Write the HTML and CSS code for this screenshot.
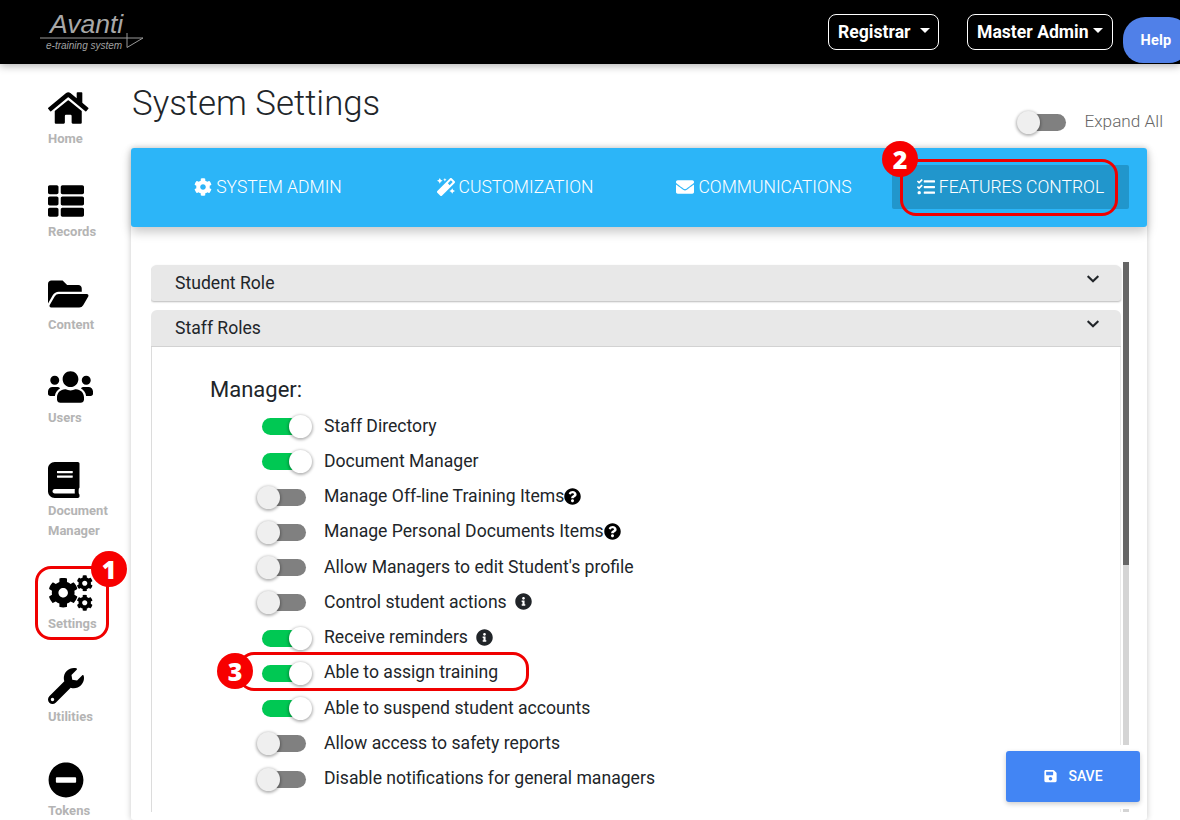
FILE: index.html
```html
<!DOCTYPE html>
<html lang="en">
<head>
<meta charset="utf-8">
<title>System Settings</title>
<link rel="stylesheet" href="styles.css">
</head>
<body>
<svg class="defs" aria-hidden="true">
  <symbol id="i-cog" viewBox="0 0 512 512"><path d="M487.4 315.7l-42.6-24.6c4.3-23.2 4.3-47 0-70.2l42.6-24.6c4.9-2.8 7.1-8.6 5.5-14-11.1-35.6-30-67.8-54.7-94.6-3.8-4.1-10-5.1-14.8-2.3L380.8 110c-17.9-15.4-38.5-27.3-60.8-35.1V25.8c0-5.6-3.9-10.5-9.4-11.7-36.7-8.2-74.3-7.8-109.2 0-5.5 1.2-9.4 6.1-9.4 11.7V75c-22.2 7.9-42.8 19.8-60.8 35.1L88.7 85.5c-4.9-2.8-11-1.9-14.8 2.3-24.7 26.7-43.6 58.9-54.7 94.6-1.7 5.4.6 11.2 5.5 14L67.3 221c-4.3 23.2-4.3 47 0 70.2l-42.6 24.6c-4.9 2.8-7.1 8.6-5.5 14 11.1 35.6 30 67.8 54.7 94.6 3.8 4.1 10 5.1 14.8 2.3l42.6-24.6c17.9 15.4 38.5 27.3 60.8 35.1v49.2c0 5.6 3.9 10.5 9.4 11.7 36.7 8.2 74.3 7.8 109.2 0 5.5-1.2 9.4-6.1 9.4-11.7v-49.2c22.2-7.9 42.8-19.8 60.8-35.1l42.6 24.6c4.9 2.8 11 1.9 14.8-2.3 24.7-26.7 43.6-58.9 54.7-94.6 1.5-5.5-.7-11.3-5.6-14.1zM256 336c-44.1 0-80-35.9-80-80s35.9-80 80-80 80 35.9 80 80-35.9 80-80 80z"/></symbol>
  <symbol id="i-question" viewBox="0 0 512 512"><path d="M504 256c0 136.997-111.043 248-248 248S8 392.997 8 256C8 119.083 119.043 8 256 8s248 111.083 248 248zM262.655 90c-54.497 0-89.255 22.957-116.549 63.758-3.536 5.286-2.353 12.415 2.715 16.258l34.699 26.31c5.205 3.947 12.621 3.008 16.665-2.122 17.864-22.658 30.113-35.797 57.303-35.797 20.429 0 45.698 13.148 45.698 32.958 0 14.976-12.363 22.667-32.534 33.976C247.128 238.528 216 254.941 216 296v4c0 6.627 5.373 12 12 12h56c6.627 0 12-5.373 12-12v-1.333c0-28.462 83.186-29.647 83.186-106.667 0-58.002-60.165-102-116.531-102zM256 338c-25.365 0-46 20.635-46 46 0 25.364 20.635 46 46 46s46-20.636 46-46c0-25.365-20.635-46-46-46z"/></symbol>
  <symbol id="i-info" viewBox="0 0 512 512"><path d="M256 8C119.043 8 8 119.083 8 256c0 136.997 111.043 248 248 248s248-111.003 248-248C504 119.083 392.957 8 256 8zm0 110c23.196 0 42 18.804 42 42s-18.804 42-42 42-42-18.804-42-42 18.804-42 42-42zm56 254c0 6.627-5.373 12-12 12h-88c-6.627 0-12-5.373-12-12v-24c0-6.627 5.373-12 12-12h12v-64h-12c-6.627 0-12-5.373-12-12v-24c0-6.627 5.373-12 12-12h64c6.627 0 12 5.373 12 12v100h12c6.627 0 12 5.373 12 12v24z"/></symbol>
  <symbol id="i-chevron" viewBox="0 0 448 512"><path d="M207.029 381.476L12.686 187.132c-9.373-9.373-9.373-24.569 0-33.941l22.667-22.667c9.357-9.357 24.522-9.375 33.901-.04L224 284.505l154.745-154.021c9.379-9.335 24.544-9.317 33.901.04l22.667 22.667c9.373 9.373 9.373 24.569 0 33.941L240.971 381.476c-9.373 9.372-24.569 9.372-33.942 0z"/></symbol>
</svg>

<header class="topbar">
  <svg class="logo" viewBox="0 0 104 42" role="img" aria-label="Avanti e-training system">
    <text class="logo-name" x="10" y="22.5">Avanti</text>
    <path class="logo-line" d="M0 28H103L87 37.5V23"/>
    <text class="logo-sub" x="6" y="38.5">e-training system</text>
  </svg>
  <div class="topbar-actions">
    <button class="role-btn role-reg">Registrar<span class="caret"></span></button>
    <button class="role-btn role-admin">Master Admin<span class="caret"></span></button>
    <button class="help-btn">Help</button>
  </div>
</header>

<div class="layout">
  <nav class="sidebar">
    <a class="nav-item">
      <svg class="nav-icon" viewBox="0 0 576 512"><path d="M280.37 148.26L96 300.11V464a16 16 0 0 0 16 16l112.06-.29a16 16 0 0 0 15.92-16V368a16 16 0 0 1 16-16h64a16 16 0 0 1 16 16v95.64a16 16 0 0 0 16 16.05L464 480a16 16 0 0 0 16-16V300L295.67 148.26a12.19 12.19 0 0 0-15.3 0zM571.6 251.47L488 182.56V44.05a12 12 0 0 0-12-12h-56a12 12 0 0 0-12 12v72.61L318.47 43a48 48 0 0 0-61 0L4.34 251.47a12 12 0 0 0-1.6 16.9l25.5 31A12 12 0 0 0 45.15 301l235.22-193.74a12.19 12.19 0 0 1 15.3 0L530.9 301a12 12 0 0 0 16.9-1.6l25.5-31a12 12 0 0 0-1.7-16.93z"/></svg>
      <span>Home</span>
    </a>
    <a class="nav-item">
      <svg class="nav-icon" viewBox="0 0 512 512"><path d="M149.333 216v80c0 13.255-10.745 24-24 24H24c-13.255 0-24-10.745-24-24v-80c0-13.255 10.745-24 24-24h101.333c13.255 0 24 10.745 24 24zM0 376v80c0 13.255 10.745 24 24 24h101.333c13.255 0 24-10.745 24-24v-80c0-13.255-10.745-24-24-24H24c-13.255 0-24 10.745-24 24zM125.333 32H24C10.745 32 0 42.745 0 56v80c0 13.255 10.745 24 24 24h101.333c13.255 0 24-10.745 24-24V56c0-13.255-10.745-24-24-24zm80 448H488c13.255 0 24-10.745 24-24v-80c0-13.255-10.745-24-24-24H205.333c-13.255 0-24 10.745-24 24v80c0 13.255 10.745 24 24 24zm-24-424v80c0 13.255 10.745 24 24 24H488c13.255 0 24-10.745 24-24V56c0-13.255-10.745-24-24-24H205.333c-13.255 0-24 10.745-24 24zm24 264H488c13.255 0 24-10.745 24-24v-80c0-13.255-10.745-24-24-24H205.333c-13.255 0-24 10.745-24 24v80c0 13.255 10.745 24 24 24z"/></svg>
      <span>Records</span>
    </a>
    <a class="nav-item">
      <svg class="nav-icon" viewBox="0 0 576 512"><path d="M572.694 292.093L500.27 416.248A63.997 63.997 0 0 1 444.989 448H45.025c-18.523 0-30.064-20.093-20.731-36.093l72.424-124.155A64 64 0 0 1 152 256h399.964c18.523 0 30.064 20.093 20.73 36.093zM152 224h328v-48c0-26.51-21.49-48-48-48H272l-64-64H48C21.49 64 0 85.49 0 112v278.046l69.077-118.418C86.214 242.25 117.989 224 152 224z"/></svg>
      <span>Content</span>
    </a>
    <a class="nav-item">
      <svg class="nav-icon" viewBox="0 0 640 512"><path d="M96 224c35.3 0 64-28.7 64-64s-28.7-64-64-64-64 28.7-64 64 28.7 64 64 64zm448 0c35.3 0 64-28.7 64-64s-28.7-64-64-64-64 28.7-64 64 28.7 64 64 64zm32 32h-64c-17.6 0-33.5 7.1-45.1 18.6 40.3 22.1 68.9 62 75.1 109.4h66c17.7 0 32-14.3 32-32v-32c0-35.3-28.7-64-64-64zm-256 0c61.9 0 112-50.1 112-112S381.9 32 320 32 208 82.1 208 144s50.1 112 112 112zm76.8 32h-8.3c-20.8 10-43.9 16-68.5 16s-47.6-6-68.5-16h-8.3C179.6 288 128 339.6 128 403.2V432c0 26.5 21.5 48 48 48h288c26.5 0 48-21.5 48-48v-28.8c0-63.6-51.6-115.2-115.2-115.2zm-223.7-13.4C161.5 263.1 145.6 256 128 256H64c-35.3 0-64 28.7-64 64v32c0 17.7 14.3 32 32 32h65.9c6.3-47.4 34.9-87.3 75.2-109.4z"/></svg>
      <span>Users</span>
    </a>
    <a class="nav-item">
      <svg class="nav-icon" viewBox="0 0 448 512"><path d="M448 360V24c0-13.3-10.7-24-24-24H96C43 0 0 43 0 96v320c0 53 43 96 96 96h328c13.3 0 24-10.7 24-24v-16c0-7.5-3.5-14.3-8.9-18.7-4.2-15.4-4.2-59.3 0-74.7 5.4-4.3 8.9-11.1 8.9-18.6zM128 134c0-3.3 2.7-6 6-6h212c3.3 0 6 2.7 6 6v20c0 3.3-2.7 6-6 6H134c-3.3 0-6-2.7-6-6v-20zm0 64c0-3.3 2.7-6 6-6h212c3.3 0 6 2.7 6 6v20c0 3.3-2.7 6-6 6H134c-3.3 0-6-2.7-6-6v-20zm253.4 250H96c-17.7 0-32-14.3-32-32 0-17.6 14.4-32 32-32h285.4c-1.9 17.1-1.9 46.9 0 64z"/></svg>
      <span>Document<br>Manager</span>
    </a>
    <a class="nav-item">
      <svg class="nav-icon" viewBox="0 0 640 512">
        <use href="#i-cog" x="0" y="36" width="432" height="432"/>
        <use href="#i-cog" x="405" y="0" width="235" height="235"/>
        <use href="#i-cog" x="405" y="277" width="235" height="235"/>
      </svg>
      <span>Settings</span>
    </a>
    <a class="nav-item nav-item-gap">
      <svg class="nav-icon" viewBox="0 0 512 512"><path d="M507.73 109.1c-2.24-9.03-13.54-12.09-20.12-5.51l-74.36 74.36-67.88-11.31-11.31-67.88 74.36-74.36c6.62-6.62 3.43-17.9-5.66-20.16-47.38-11.74-99.55.91-136.58 37.93-39.64 39.64-50.55 97.1-34.05 147.2L18.74 402.76c-24.99 24.99-24.99 65.51 0 90.5 24.99 24.99 65.51 24.99 90.5 0l213.21-213.21c50.12 16.71 107.47 5.68 147.37-34.22 37.07-37.07 49.7-89.32 37.91-136.73zM64 472c-13.25 0-24-10.75-24-24 0-13.26 10.75-24 24-24s24 10.74 24 24c0 13.25-10.75 24-24 24z"/></svg>
      <span>Utilities</span>
    </a>
    <a class="nav-item">
      <svg class="nav-icon" viewBox="0 0 512 512"><path d="M256 8C119 8 8 119 8 256s111 248 248 248 248-111 248-248S393 8 256 8zM124 296c-6.6 0-12-5.4-12-12v-56c0-6.6 5.4-12 12-12h264c6.6 0 12 5.4 12 12v56c0 6.6-5.4 12-12 12H124z"/></svg>
      <span>Tokens</span>
    </a>
  </nav>

  <main class="main">
    <div class="title-row">
      <h1 class="page-title">System Settings</h1>
      <div class="expand">
        <span class="switch switch-off"></span>
        <span class="expand-label">Expand All</span>
      </div>
    </div>

    <section class="card">
      <div class="tabs">
        <a class="tab">
          <svg class="tab-icon" viewBox="0 0 512 512"><use href="#i-cog"/></svg>SYSTEM ADMIN
        </a>
        <a class="tab">
          <svg class="tab-icon" viewBox="0 0 512 512"><path d="M224 96l16-32 32-16-32-16-16-32-16 32-32 16 32 16 16 32zM80 160l26.66-53.33L160 80l-53.34-26.67L80 0 53.34 53.33 0 80l53.34 26.67L80 160zm352 128l-26.66 53.33L352 368l53.34 26.67L432 448l26.66-53.33L512 368l-53.34-26.67L432 288zm70.62-193.77L417.77 9.38C411.53 3.12 403.34 0 395.15 0c-8.19 0-16.38 3.12-22.63 9.38L9.38 372.52c-12.5 12.5-12.5 32.76 0 45.25l84.85 84.85c6.25 6.25 14.44 9.37 22.62 9.37 8.19 0 16.38-3.12 22.63-9.37l363.14-363.15c12.5-12.48 12.5-32.75 0-45.24zM359.45 203.46l-50.91-50.91 86.6-86.6 50.91 50.91-86.6 86.6z"/></svg>CUSTOMIZATION
        </a>
        <a class="tab">
          <svg class="tab-icon" viewBox="0 0 512 512"><path d="M502.3 190.8c3.9-3.1 9.7-.2 9.7 4.7V400c0 26.5-21.5 48-48 48H48c-26.5 0-48-21.5-48-48V195.6c0-5 5.7-7.8 9.7-4.7 22.4 17.4 52.1 39.5 154.1 113.6 21.1 15.4 56.7 47.8 92.2 47.6 35.7.3 72-32.8 92.3-47.6 102-74.1 131.6-96.3 154-113.7zM256 320c23.2.4 56.6-29.2 73.4-41.4 132.7-96.3 142.8-104.7 173.4-128.7 5.8-4.5 9.2-11.5 9.2-18.9v-19c0-26.5-21.5-48-48-48H48C21.5 64 0 85.5 0 112v19c0 7.4 3.4 14.3 9.2 18.9 30.6 23.9 40.7 32.4 173.4 128.7 16.8 12.2 50.2 41.8 73.4 41.4z"/></svg>COMMUNICATIONS
        </a>
        <a class="tab tab-active">
          <svg class="tab-icon" viewBox="0 0 512 512"><path d="M139.61 35.5a12 12 0 0 0-17 0L58.93 98.81l-22.7-22.12a12 12 0 0 0-17 0L3.53 92.41a12 12 0 0 0 0 17l47.59 47.4a12.78 12.78 0 0 0 17.61 0l15.59-15.62L156.52 69a12.09 12.09 0 0 0 .09-17zm0 159.19a12 12 0 0 0-17 0l-63.68 63.72-22.7-22.1a12 12 0 0 0-17 0L3.53 252a12 12 0 0 0 0 17L51 316.5a12.77 12.77 0 0 0 17.6 0l15.7-15.69 72.2-72.22a12 12 0 0 0 .09-16.9zM64 368c-26.49 0-48.59 21.5-48.59 48S37.53 464 64 464a48 48 0 0 0 0-96zm432 16H208a16 16 0 0 0-16 16v32a16 16 0 0 0 16 16h288a16 16 0 0 0 16-16v-32a16 16 0 0 0-16-16zm0-320H208a16 16 0 0 0-16 16v32a16 16 0 0 0 16 16h288a16 16 0 0 0 16-16V80a16 16 0 0 0-16-16zm0 160H208a16 16 0 0 0-16 16v32a16 16 0 0 0 16 16h288a16 16 0 0 0 16-16v-32a16 16 0 0 0-16-16z"/></svg>FEATURES CONTROL
        </a>
      </div>

      <div class="scroller">
        <div class="accordion">
          <div class="acc-head acc-closed">
            <span>Student Role</span>
            <svg class="chevron"><use href="#i-chevron"/></svg>
          </div>
          <div class="acc-head acc-open">
            <span>Staff Roles</span>
            <svg class="chevron"><use href="#i-chevron"/></svg>
          </div>
          <div class="acc-body">
            <h2 class="role-title">Manager:</h2>
            <ul class="perm-list">
              <li class="perm"><span class="switch switch-on"></span>Staff Directory</li>
              <li class="perm"><span class="switch switch-on"></span>Document Manager</li>
              <li class="perm"><span class="switch switch-off"></span>Manage Off-line Training Items<svg class="hint hint-q"><use href="#i-question"/></svg></li>
              <li class="perm"><span class="switch switch-off"></span>Manage Personal Documents Items<svg class="hint hint-q"><use href="#i-question"/></svg></li>
              <li class="perm"><span class="switch switch-off"></span>Allow Managers to edit Student's profile</li>
              <li class="perm"><span class="switch switch-off"></span>Control student actions<svg class="hint hint-i"><use href="#i-info"/></svg></li>
              <li class="perm"><span class="switch switch-on"></span>Receive reminders<svg class="hint hint-i"><use href="#i-info"/></svg></li>
              <li class="perm"><span class="switch switch-on"></span>Able to assign training</li>
              <li class="perm"><span class="switch switch-on"></span>Able to suspend student accounts</li>
              <li class="perm"><span class="switch switch-off"></span>Allow access to safety reports</li>
              <li class="perm"><span class="switch switch-off"></span>Disable notifications for general managers</li>
            </ul>
          </div>
        </div>
        <div class="scrolltrack"><div class="scrollthumb"></div></div>
      </div>
    </section>
  </main>
</div>

<div class="save-wrap">
  <button class="save-btn">
    <svg class="save-icon" viewBox="0 0 448 512"><path d="M433.941 129.941l-83.882-83.882A48 48 0 0 0 316.118 32H48C21.49 32 0 53.49 0 80v352c0 26.51 21.49 48 48 48h352c26.51 0 48-21.49 48-48V163.882a48 48 0 0 0-14.059-33.941zM224 416c-35.346 0-64-28.654-64-64 0-35.346 28.654-64 64-64s64 28.654 64 64c0 35.346-28.654 64-64 64zm96-304.52V212c0 6.627-5.373 12-12 12H76c-6.627 0-12-5.373-12-12V108c0-6.627 5.373-12 12-12h228.52c3.183 0 6.235 1.264 8.485 3.515l3.48 3.48A11.996 11.996 0 0 1 320 111.48z"/></svg>SAVE
  </button>
</div>

<div class="callout-box callout-settings"></div>
<div class="callout-box callout-features"></div>
<div class="callout-box callout-assign"></div>
<div class="badge badge-1">1</div>
<div class="badge badge-2">2</div>
<div class="badge badge-3">3</div>
</body>
</html>
```

FILE: styles.css
```css
* { box-sizing: border-box; }
html, body { height: 100%; }
body {
  margin: 0;
  height: 820px;
  overflow: hidden;
  background: #fff;
  color: #212529;
  font-family: Roboto, "Liberation Sans", sans-serif;
}
.defs { display: none; }

/* top bar */
.topbar {
  position: relative;
  z-index: 5;
  height: 64px;
  background: #000;
  box-shadow: 0 2px 8px rgba(0,0,0,.3);
  display: flex;
  align-items: flex-start;
  justify-content: space-between;
  padding-left: 40px;
}
.logo { width: 104px; height: 42px; margin-top: 10px; fill: #a8a8a8; }
.logo-name { font: italic 400 26.5px "Liberation Sans", sans-serif; }
.logo-sub { font: italic 400 10px "Liberation Sans", sans-serif; fill: #a0a0a0; }
.logo-line { fill: none; stroke: #999; stroke-width: 1; }
.topbar-actions { display: flex; align-items: flex-start; }
.role-btn {
  height: 36px;
  margin-top: 14px;
  background: #000;
  color: #fff;
  border: 1px solid #fff;
  border-radius: 8px;
  font: 700 17.6px Roboto, sans-serif;
  display: flex;
  align-items: center;
  padding: 0 9px;
}
.role-reg { width: 111px; margin-right: 28px; }
.role-admin { width: 146px; margin-right: 10px; }
.caret {
  width: 0;
  height: 0;
  border-left: 5px solid transparent;
  border-right: 5px solid transparent;
  border-top: 5px solid #fff;
  margin-left: 9px;
  margin-top: -3px;
}
.role-admin .caret { margin-left: 4px; }
.help-btn {
  width: 66px;
  height: 46px;
  margin-top: 17px;
  margin-right: -9px;
  background: #5080e8;
  color: #fff;
  border: 0;
  border-radius: 22px 20px 20px 20px;
  font: 700 14.5px Roboto, sans-serif;
  letter-spacing: .2px;
  padding: 0;
  text-align: center;
}

/* layout */
.layout { display: flex; height: 756px; overflow: hidden; }

/* sidebar */
.sidebar {
  flex: 0 0 131px;
  padding: 26px 0 0 48px;
  display: flex;
  flex-direction: column;
}
.nav-item {
  display: flex;
  flex-direction: column;
  align-items: flex-start;
  flex: none;
  margin-bottom: 34px;
  color: #b4b4b4;
  font-size: 13px;
  font-weight: 700;
  line-height: 20px;
  white-space: nowrap;
}
.nav-item-gap { margin-bottom: 35px; }
.nav-icon { height: 36px; width: auto; fill: #000; margin-bottom: 3px; display: block; }

/* main */
.main { flex: 0 0 1016px; display: flex; flex-direction: column; }
.title-row {
  height: 84px;
  flex: none;
  display: flex;
  justify-content: space-between;
  align-items: flex-start;
  padding-left: 1px;
}
.page-title {
  margin: 17px 0 0;
  font-size: 34.8px;
  line-height: 44px;
  font-weight: 300;
  color: #212529;
}
.expand {
  display: flex;
  align-items: center;
  margin-top: 45px;
  margin-right: -16px;
}
.expand .switch { margin-top: 2px; }
.expand-label { font-size: 17.2px; font-weight: 300; color: #666; margin: -2px 0 0 11px; }

/* switch */
.switch {
  position: relative;
  display: block;
  flex: none;
  width: 57px;
  height: 23px;
}
.switch::before {
  content: "";
  position: absolute;
  left: 6px;
  right: 7px;
  top: 3px;
  height: 17px;
  border-radius: 9px;
}
.switch::after {
  content: "";
  position: absolute;
  top: 0;
  width: 23px;
  height: 23px;
  border-radius: 50%;
  box-shadow: 0 1px 3px 1px rgba(0,0,0,.3);
}
.switch-off::before { background: #808080; }
.switch-off::after { left: 1px; background: #efefef; }
.switch-on::before { background: #00c853; }
.switch-on::after { right: 1px; background: #fff; }

/* card */
.card {
  flex: 1;
  background: #fff;
  box-shadow: 0 0 6px rgba(0,0,0,.22);
  border-radius: 3px;
  display: flex;
  flex-direction: column;
  min-height: 0;
}
.tabs {
  flex: none;
  height: 79px;
  background: #2cb5f8;
  border-radius: 3px;
  box-shadow: 0 5px 11px rgba(0,0,0,.22);
  padding: 17px 18px 18px 11px;
  display: grid;
  grid-template-columns: 252px 242px 256px 237px;
  position: relative;
}
.tab {
  display: flex;
  align-items: center;
  justify-content: center;
  height: 44px;
  color: #fff;
  font-size: 17.5px;
  font-weight: 300;
  white-space: nowrap;
  border-radius: 2px;
}
.tab-active { background: #2196cc; }
.tab-icon { width: 18px; height: 18px; fill: #fff; margin-right: 4px; flex: none; }

/* scroller */
.scroller {
  position: relative;
  flex: none;
  height: 550px;
  margin: 35px 18px 0 20px;
  display: flex;
  overflow: hidden;
}
.accordion { width: 970px; padding-top: 3px; flex: none; }
.acc-head {
  display: flex;
  justify-content: space-between;
  align-items: center;
  background: #e8e8e8;
  font-size: 17.6px;
  line-height: 24px;
  border-radius: 6px 6px 0 0;
  padding: 0 22px 0 24px;
}
.acc-closed {
  height: 36px;
  margin-bottom: 9px;
  box-shadow: 0 1px 2px rgba(0,0,0,.28);
  border-radius: 6px 6px 3px 3px;
}
.acc-open { height: 37px; border-bottom: 1px solid #d2d2d2; }
.chevron { width: 12px; height: 14px; fill: #212529; margin-top: -8px; }
.acc-body {
  height: 600px;
  border-left: 1px solid #dcdcdc;
  border-right: 1px solid #eaeaea;
  padding: 30px 0 0 58px;
}
.role-title { margin: 0; font-size: 22px; line-height: 26px; font-weight: 400; }
.perm-list { list-style: none; margin: 5px 0 0 46px; padding: 0; }
.perm {
  display: flex;
  align-items: center;
  height: 35.25px;
  font-size: 17.6px;
  white-space: nowrap;
}
.perm .switch { margin-right: 11px; margin-top: 2px; }
.hint { width: 17px; height: 17px; flex: none; }
.hint-q { fill: #000; }
.hint-i { fill: #212529; margin-left: 8px; }

.scrolltrack {
  margin-left: 2px;
  width: 6px;
  height: 100%;
  background: #d4d4d4;
}
.scrollthumb { height: 303px; background: #666; }

/* save */
.save-wrap {
  position: absolute;
  left: 1000px;
  top: 745px;
  width: 146px;
  height: 64px;
  background: #fff;
  padding: 6px 0 0 6px;
  z-index: 6;
}
.save-btn {
  width: 134px;
  height: 51px;
  display: flex;
  align-items: center;
  justify-content: center;
  background: #4285f4;
  color: #fff;
  border: 0;
  border-radius: 3px;
  box-shadow: 0 2px 5px rgba(0,0,0,.2);
  font: 500 14px Roboto, sans-serif;
  padding: 0 0 2px 1px;
}
.save-icon { width: 13px; height: 14px; fill: #fff; margin-right: 11px; }

/* annotations */
.callout-box {
  position: absolute;
  border: 3px solid #f00000;
  z-index: 7;
}
.callout-settings { left: 35px; top: 566px; width: 74px; height: 74px; border-radius: 16px; }
.callout-features { left: 900px; top: 159px; width: 218px; height: 57px; border-radius: 16px; }
.callout-assign { left: 238px; top: 652px; width: 291px; height: 39px; border-radius: 16px; }
.badge {
  position: absolute;
  z-index: 8;
  width: 36px;
  height: 36px;
  border-radius: 50%;
  background: #f70000;
  color: #fff;
  font: 800 25px/36px "Open Sans", sans-serif;
  text-align: center;
}
.badge-1 { left: 91px; top: 551px; }
.badge-2 { left: 882px; top: 141px; }
.badge-3 { left: 217px; top: 653px; }
```
